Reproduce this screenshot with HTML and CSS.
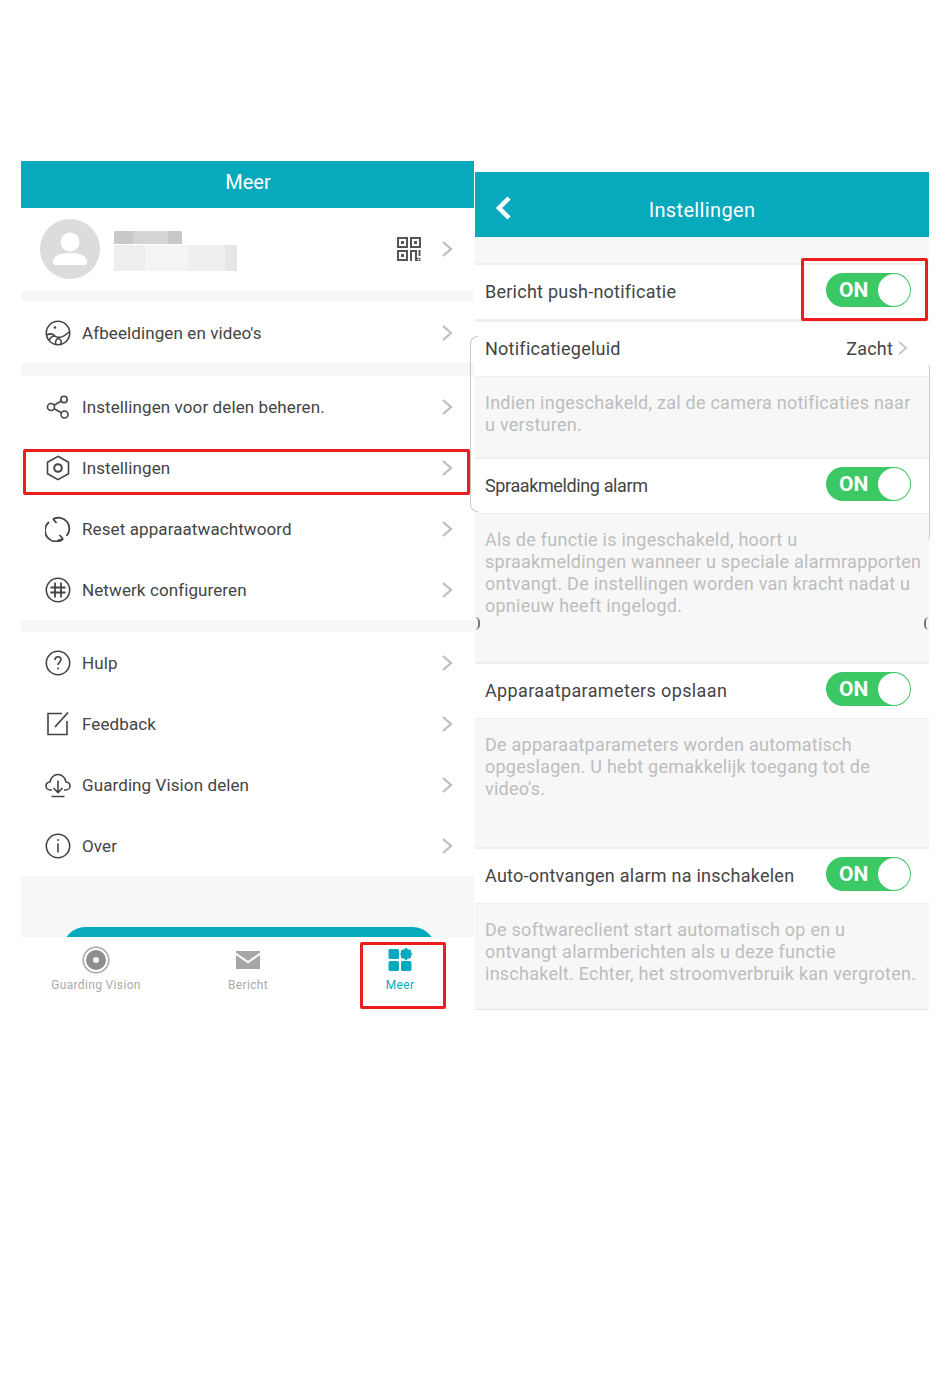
FILE: index.html
```html
<!DOCTYPE html>
<html lang="nl">
<head>
  <meta charset="UTF-8" />
  <meta name="viewport" content="width=device-width, initial-scale=1" />
  <title>Guarding Vision instellingen</title>
  <link rel="stylesheet" href="styles.css">
</head>
<body>
  <div class="page">

    <!-- left phone: Meer -->
    <section class="panel panel-more">
      <header class="title-bar title-more">Meer</header>

      <div class="profile">
        <div class="avatar">
          <svg viewBox="0 0 60 60" width="60" height="60"><circle cx="30" cy="23" r="9.5" fill="#fff"/><path d="M16 46c-2 0-3-1-3-3 0-6 7-9 17-9s17 3 17 9c0 2-1 3-3 3z" fill="#fff"/></svg>
        </div>
        <div class="blurred">
          <div class="blur-name"></div>
          <div class="blur-mail"></div>
        </div>
        <svg class="qr" viewBox="0 0 24 24" width="24" height="24" fill="none" stroke="#555" stroke-width="2">
          <rect x="1" y="1" width="9" height="9"/><rect x="14" y="1" width="9" height="9"/><rect x="1" y="14" width="9" height="9"/>
          <rect x="4" y="4" width="3" height="3" fill="#555" stroke="none"/><rect x="17" y="4" width="3" height="3" fill="#555" stroke="none"/><rect x="4" y="17" width="3" height="3" fill="#555" stroke="none"/>
          <path d="M14 24v-10h5v10M22.500 13v6"/><path d="M20 21.500h1.500M22 21.500h1.500M20 23.500h1.500M22 23.500h1.500" stroke-width="1.400"/>
        </svg>
        <svg class="chevron" viewBox="0 0 12 18" width="12" height="18"><path d="M2 2l8 7-8 7" fill="none" stroke="#bdbdbd" stroke-width="2.2"/></svg>
      </div>

      <div class="gap"></div>
      <a class="menu-row">
        <svg class="icon" viewBox="0 0 26 26" fill="none" stroke="#444" stroke-width="1.6"><circle cx="13" cy="13" r="11.7"/><path d="M2 15c3-2 6-1 8 1 3 2.500 8 1.500 14-4"/><path d="M4.500 20c1-3 3-4 5.500-4M12.500 18.500c-2 2-2.500 4-1.500 6M12.500 18.500c3 .5 5 2.500 3 6"/><circle cx="10" cy="7.500" r="1.300" fill="#444" stroke="none"/></svg>
        <span class="label">Afbeeldingen en video's</span>
        <svg class="chevron" viewBox="0 0 12 18" width="12" height="18"><path d="M2 2l8 7-8 7" fill="none" stroke="#bdbdbd" stroke-width="2.2"/></svg>
      </a>
      <div class="gap gap-tall"></div>
      <a class="menu-row">
        <svg class="icon" viewBox="0 0 26 26" fill="none" stroke="#444" stroke-width="1.6"><circle cx="6" cy="13" r="3.500"/><circle cx="19" cy="5.500" r="3.200"/><circle cx="19.500" cy="20.500" r="3.500"/><path d="M9 11.200l7.300-4.200M9 14.800l7.500 4"/></svg>
        <span class="label">Instellingen voor delen beheren.</span>
        <svg class="chevron" viewBox="0 0 12 18" width="12" height="18"><path d="M2 2l8 7-8 7" fill="none" stroke="#bdbdbd" stroke-width="2.2"/></svg>
      </a>
      <a class="menu-row">
        <svg class="icon" viewBox="0 0 26 26" fill="none" stroke="#444" stroke-width="1.6"><path d="M13 1.300l10.500 5.900v11.600L13 24.700 2.500 18.800V7.200z"/><circle cx="13" cy="13" r="3.800" stroke-width="2"/></svg>
        <span class="label">Instellingen</span>
        <svg class="chevron" viewBox="0 0 12 18" width="12" height="18"><path d="M2 2l8 7-8 7" fill="none" stroke="#bdbdbd" stroke-width="2.2"/></svg>
      </a>
      <a class="menu-row">
        <svg class="icon" viewBox="0 0 26 26" fill="none" stroke="#444" stroke-width="1.8"><path d="M8 3a11 11 0 0 1 13.500 17"/><path d="M18 23a11 11 0 0 1-14-17"/><path d="M8 3l5.500-1.500M8 3l3.500 4M18 23l-5.500 1.500M18 23l-3.500-4"/></svg>
        <span class="label">Reset apparaatwachtwoord</span>
        <svg class="chevron" viewBox="0 0 12 18" width="12" height="18"><path d="M2 2l8 7-8 7" fill="none" stroke="#bdbdbd" stroke-width="2.2"/></svg>
      </a>
      <a class="menu-row">
        <svg class="icon" viewBox="0 0 26 26" fill="none" stroke="#444" stroke-width="1.6"><circle cx="13" cy="13" r="11.700"/><path d="M10 5.500v15M16 5.500v15M5.500 10.500h15M5.500 15.500h15" stroke-width="1.800"/></svg>
        <span class="label">Netwerk configureren</span>
        <svg class="chevron" viewBox="0 0 12 18" width="12" height="18"><path d="M2 2l8 7-8 7" fill="none" stroke="#bdbdbd" stroke-width="2.2"/></svg>
      </a>
      <div class="gap"></div>
      <a class="menu-row">
        <svg class="icon" viewBox="0 0 26 26" fill="none" stroke="#444" stroke-width="1.6"><circle cx="13" cy="13" r="11.700"/><path d="M10 10c0-2 1.300-3.300 3-3.300s3 1.200 3 2.900c0 2.400-3 2.600-3 5.400"/><circle cx="13" cy="18.500" r="1" fill="#444" stroke="none"/></svg>
        <span class="label">Hulp</span>
        <svg class="chevron" viewBox="0 0 12 18" width="12" height="18"><path d="M2 2l8 7-8 7" fill="none" stroke="#bdbdbd" stroke-width="2.2"/></svg>
      </a>
      <a class="menu-row">
        <svg class="icon" viewBox="0 0 26 26" fill="none" stroke="#444" stroke-width="1.6"><path d="M17 2.500H3v21h19V10"/><path d="M10 16L23 1.500" stroke-width="1.800"/></svg>
        <span class="label">Feedback</span>
        <svg class="chevron" viewBox="0 0 12 18" width="12" height="18"><path d="M2 2l8 7-8 7" fill="none" stroke="#bdbdbd" stroke-width="2.2"/></svg>
      </a>
      <a class="menu-row">
        <svg class="icon" viewBox="0 0 26 26" fill="none" stroke="#444" stroke-width="1.6"><path d="M7 18H5.500C2.800 18 1 16 1 14s1.500-3.800 4-4c.5-4 3.800-7.500 8-7.500s7.500 3.500 8 7.500c2.500.2 4 2 4 4s-1.800 4-4.500 4H19"/><path d="M13 8.500v12M8.500 16l4.500 4.500 4.500-4.500M6.500 24.500h13"/></svg>
        <span class="label">Guarding Vision delen</span>
        <svg class="chevron" viewBox="0 0 12 18" width="12" height="18"><path d="M2 2l8 7-8 7" fill="none" stroke="#bdbdbd" stroke-width="2.2"/></svg>
      </a>
      <a class="menu-row">
        <svg class="icon" viewBox="0 0 26 26" fill="none" stroke="#444" stroke-width="1.6"><circle cx="13" cy="13" r="11.700"/><path d="M13 10.500v9"/><circle cx="13" cy="7" r="1" fill="#444" stroke="none"/></svg>
        <span class="label">Over</span>
        <svg class="chevron" viewBox="0 0 12 18" width="12" height="18"><path d="M2 2l8 7-8 7" fill="none" stroke="#bdbdbd" stroke-width="2.2"/></svg>
      </a>

      <div class="logout-area"><div class="logout-btn"></div></div>

      <nav class="tabs">
        <div class="tab">
          <svg viewBox="0 0 28 28" width="28" height="28"><circle cx="14" cy="14" r="10" fill="#8e8e8e"/><circle cx="14" cy="14" r="12.800" fill="none" stroke="#a8a8a8" stroke-width="1.600"/><circle cx="14" cy="14" r="3" fill="#f4f4f4"/></svg>
          <span>Guarding Vision</span>
        </div>
        <div class="tab">
          <svg viewBox="0 0 28 28" width="28" height="28"><path d="M2 5h24v1.500L14 15 2 6.500z" fill="#a6a6a6"/><path d="M2 9l12 8.500L26 9v14H2z" fill="#a6a6a6"/></svg>
          <span>Bericht</span>
        </div>
        <div class="tab tab-active">
          <svg viewBox="0 0 28 28" width="28" height="28" fill="#07a9bd"><rect x="2.500" y="3" width="10.500" height="10" rx="1.500"/><path d="M20 1.500l2 2h1.500a1.500 1.500 0 0 1 1.500 1.500v1.500l1.500 1.500-1.500 1.500v1.500a1.500 1.500 0 0 1-1.500 1.500H22l-2 2-2-2h-1.500a1.500 1.500 0 0 1-1.500-1.500V9.500L14 8l1-1.500V5a1.500 1.500 0 0 1 1.500-1.500H18z"/><rect x="2.500" y="15" width="10.500" height="10" rx="1.500"/><rect x="15" y="15" width="10.500" height="10" rx="1.500"/></svg>
          <span>Meer</span>
        </div>
      </nav>

      <div class="mark mark-settings"></div>
      <div class="mark mark-tab"></div>
    </section>

    <!-- right phone: Instellingen -->
    <section class="panel panel-settings">
      <header class="title-bar title-settings">
        <svg class="back" viewBox="0 0 18 26" width="18" height="26"><path d="M14 3L4 13l10 10" fill="none" stroke="#fff" stroke-width="4.500"/></svg>
        Instellingen
      </header>
      <div class="spacer"></div>

      <div class="set-row">
        <span class="label">Bericht push-notificatie</span>
        <div class="toggle"><span>ON</span><i></i></div>
      </div>
      <div class="set-row">
        <span class="label">Notificatiegeluid</span>
        <span class="value">Zacht<svg viewBox="0 0 12 18" width="11" height="16"><path d="M2 2l8 7-8 7" fill="none" stroke="#c8c8c8" stroke-width="2.200"/></svg></span>
      </div>
      <p class="desc desc-sound">Indien ingeschakeld, zal de camera notificaties naar<br>u versturen.</p>

      <div class="set-row">
        <span class="label label-tight">Spraakmelding alarm</span>
        <div class="toggle"><span>ON</span><i></i></div>
      </div>
      <p class="desc desc-voice">Als de functie is ingeschakeld, hoort u<br>spraakmeldingen wanneer u speciale alarmrapporten<br>ontvangt. De instellingen worden van kracht nadat u<br>opnieuw heeft ingelogd.</p>

      <div class="set-row">
        <span class="label label-wide">Apparaatparameters opslaan</span>
        <div class="toggle"><span>ON</span><i></i></div>
      </div>
      <p class="desc desc-params">De apparaatparameters worden automatisch<br>opgeslagen. U hebt gemakkelijk toegang tot de<br>video's.</p>

      <div class="set-row">
        <span class="label">Auto-ontvangen alarm na inschakelen</span>
        <div class="toggle"><span>ON</span><i></i></div>
      </div>
      <p class="desc desc-auto">De softwareclient start automatisch op en u<br>ontvangt alarmberichten als u deze functie<br>inschakelt. Echter, het stroomverbruik kan vergroten.</p>

      <div class="curve curve-left"></div>
      <div class="curve curve-right"></div>
      <div class="notch notch-left"></div>
      <div class="notch notch-right"></div>
      <div class="mark mark-toggle"></div>
    </section>
  </div>
</body>
</html>
```

FILE: styles.css
```css
* {
  box-sizing: border-box;
}
body {
  margin: 0;
  background: #fff;
  font-family: Roboto, "Liberation Sans", sans-serif;
  color: #444;
}
.page {
  display: flex;
  align-items: flex-start;
  height: 1383px;
  padding: 161px 0 0 21px;
  overflow: hidden;
}
.panel {
  position: relative;
}
.panel-more {
  width: 453px;
}
.panel-settings {
  width: 454px;
  margin-top: 11px;
  margin-left: 1px;
  background: #f7f7f7;
}

/* title bars */
.title-bar {
  background: #07a9bd;
  color: #fff;
  display: flex;
  align-items: center;
  justify-content: center;
  font-size: 20px;
}
.title-more {
  height: 47px;
  padding-bottom: 5px;
  padding-left: 1px;
}
.title-settings {
  position: relative;
  height: 65px;
  padding-top: 10px;
  letter-spacing: .35px;
}
.back {
  position: absolute;
  left: 20px;
  top: 23px;
}

/* left list */
.profile {
  height: 82px;
  display: flex;
  align-items: center;
  padding: 0 21px 0 19px;
}
.avatar {
  width: 60px;
  height: 60px;
  border-radius: 50%;
  background: #dcdcdc;
  flex: none;
  margin-top: -1px;
}
.blurred {
  flex: 1;
  margin-left: 14px;
  margin-top: 3px;
}
.blur-name {
  width: 68px;
  height: 13px;
  background: linear-gradient(90deg, #c9c9c9 0 28%, #d4d4d4 28% 80%, #c8c8c8 80%);
}
.blur-mail {
  width: 123px;
  height: 26px;
  margin-top: 1px;
  background: linear-gradient(90deg, #eee 0 25%, #f4f4f4 25% 60%, #efefef 60% 90%, #e6e6e6 90%);
}
.qr {
  margin-right: 20px;
}
.gap {
  height: 12px;
  background: #f7f7f7;
}
.gap-tall {
  height: 13px;
}
.menu-row {
  height: 61px;
  display: flex;
  align-items: center;
  padding: 0 21px 0 24px;
  background: #fff;
}
.icon {
  width: 26px;
  height: 26px;
  flex: none;
}
.menu-row .label {
  flex: 1;
  margin-left: 11px;
  font-size: 17px;
  letter-spacing: .1px;
}
.logout-area {
  height: 61px;
  padding: 51px 39px 0 42px;
  background: #f7f7f7;
  overflow: hidden;
}
.logout-btn {
  height: 44px;
  border-radius: 22px;
  background: #07a9bd;
}
.tabs {
  display: flex;
  height: 73px;
  margin-left: -1px;
  background: #fff;
}
.tab {
  flex: 0 0 152px;
  display: flex;
  flex-direction: column;
  align-items: center;
  padding-top: 9px;
  gap: 4px;
  font-size: 12px;
  letter-spacing: .35px;
  color: #aaa;
}
.tab-active {
  color: #07a9bd;
}

/* right list */
.spacer {
  height: 26px;
}
.set-row {
  height: 57px;
  display: flex;
  align-items: center;
  justify-content: space-between;
  padding: 0 18px 2px 10px;
  background: #fff;
  border-top: 2px solid #eee;
  border-bottom: 1px solid #eee;
}
.set-row .label {
  font-size: 18px;
  letter-spacing: .25px;
  color: #444;
}
.set-row .label-tight {
  letter-spacing: -.38px;
}
.set-row .label-wide {
  letter-spacing: .37px;
}
.value {
  display: flex;
  align-items: center;
  gap: 4px;
  font-size: 18px;
  letter-spacing: .2px;
  margin-right: 3px;
}
.toggle {
  position: relative;
  width: 85px;
  height: 34px;
  border-radius: 17px;
  background: #3cc864;
  margin-top: -3px;
}
.toggle span {
  position: absolute;
  left: 13px;
  top: 5px;
  font-size: 21px;
  line-height: 24px;
  font-weight: 700;
  color: #fff;
}
.toggle i {
  position: absolute;
  right: 1px;
  top: 1px;
  width: 32px;
  height: 32px;
  border-radius: 50%;
  background: #fff;
}
.desc {
  margin: 0;
  padding: 15px 0 0 10px;
  font-size: 18px;
  line-height: 22px;
  letter-spacing: .25px;
  color: #bdbdbd;
  white-space: nowrap;
}
.desc-sound {
  height: 80px;
}
.desc-voice {
  height: 148px;
}
.desc-params {
  height: 128px;
}
.desc-auto {
  height: 106px;
  border-bottom: 1px solid #e6e6e6;
}

/* leftovers of the screenshot montage */
.curve {
  position: absolute;
  pointer-events: none;
}
.curve-left {
  left: -5px;
  top: 164px;
  width: 8px;
  height: 176px;
  border: 1px solid #c9c9c9;
  border-right: 0;
  border-radius: 8px 0 0 8px;
}
.curve-right {
  right: -1px;
  top: 192px;
  width: 4px;
  height: 176px;
  border-right: 1px solid #c9c9c9;
  border-radius: 0 8px 8px 0;
}
.notch {
  position: absolute;
  top: 445px;
  width: 5px;
  height: 13px;
  border: 2px solid #777;
}
.notch-left {
  left: 0;
  border-width: 0 2px 0 0;
  border-radius: 0 5px 5px 0;
}
.notch-right {
  right: 0;
  border-width: 0 0 0 2px;
  border-radius: 5px 0 0 5px;
}

/* red callouts */
.mark {
  position: absolute;
  border: 3px solid #ee1c1c;
  border-radius: 2px;
}
.mark-settings {
  left: 2px;
  top: 288px;
  width: 447px;
  height: 46px;
}
.mark-tab {
  left: 339px;
  top: 781px;
  width: 86px;
  height: 67px;
}
.mark-toggle {
  left: 326px;
  top: 86px;
  width: 127px;
  height: 63px;
}
```
